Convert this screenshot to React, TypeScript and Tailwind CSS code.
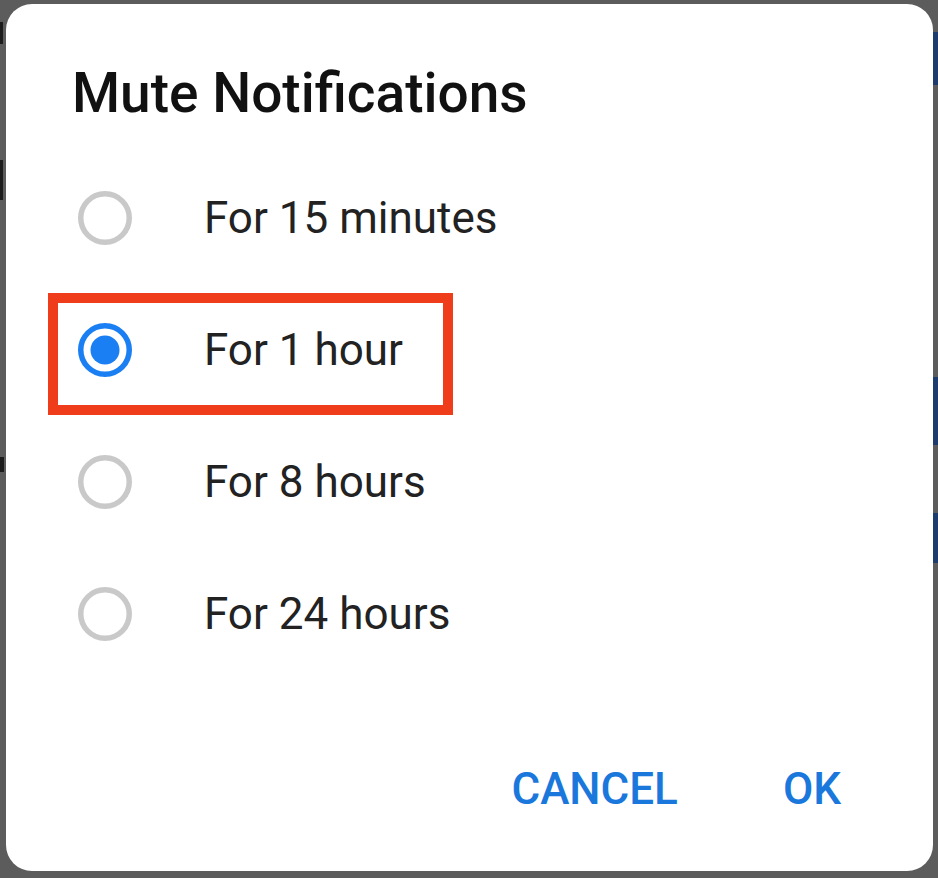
import React from "react";

const options = ["For 15 minutes", "For 1 hour", "For 8 hours", "For 24 hours"];

function Radio({ checked }: { checked: boolean }) {
  return (
    <svg width="56" height="56" viewBox="0 0 56 56">
      <circle
        cx="28"
        cy="28"
        r="24.25"
        fill="none"
        stroke={checked ? "#1a7ff2" : "#c9c9c9"}
        strokeWidth="5.5"
      />
      {checked && <circle cx="28" cy="28" r="14.5" fill="#1a7ff2" />}
    </svg>
  );
}

export default function App() {
  return (
    <div
      className="relative w-[938px] h-[878px] bg-[#5c5c5c] pt-[4px] pl-[6px] pr-[5px] pb-[7px]"
      style={{ fontFamily: "Roboto, 'Noto Sans', sans-serif" }}
    >
      {/* background fragments peeking out at the edges */}
      <div className="absolute left-0 top-[22px] w-[3px] h-[22px] bg-[#1c1c1c]" />
      <div className="absolute left-0 top-[160px] w-[3px] h-[40px] bg-[#1c1c1c]" />
      <div className="absolute left-0 top-[457px] w-[4px] h-[15px] bg-[#1c1c1c]" />
      <div className="absolute right-0 top-[32px] w-[5px] h-[53px] bg-[#1d3b6c]" />
      <div className="absolute right-0 top-[377px] w-[5px] h-[68px] bg-[#1d3b6c]" />
      <div className="absolute right-0 top-[513px] w-[5px] h-[50px] bg-[#1d3b6c]" />

      <div className="relative flex flex-col h-full bg-white rounded-[26px]">
        <div className="pl-[66px] pt-[62px] text-[55px] leading-[55px] font-medium text-[#111111]">
          Mute Notifications
        </div>

        <div className="mt-[31px] flex flex-col">
          {options.map((o, i) => (
            <div key={o} className="relative flex items-center h-[132px]">
              <div className="ml-[71px] w-[56px] h-[56px] flex items-center justify-center">
                <Radio checked={i === 1} />
              </div>
              <span className="ml-[71px] text-[44px] leading-[44px] text-[#222222]">{o}</span>
              {i === 1 && (
                <div className="absolute left-[42px] top-[9px] w-[405px] h-[122px] border-[10px] border-[#ef3d1b]" />
              )}
            </div>
          ))}
        </div>

        <div className="mt-auto pb-[60px] pr-[92px] flex justify-end gap-[105px] text-[44px] leading-[44px] font-medium text-[#1a78dc]">
          <span>CANCEL</span>
          <span>OK</span>
        </div>
      </div>
    </div>
  );
}
